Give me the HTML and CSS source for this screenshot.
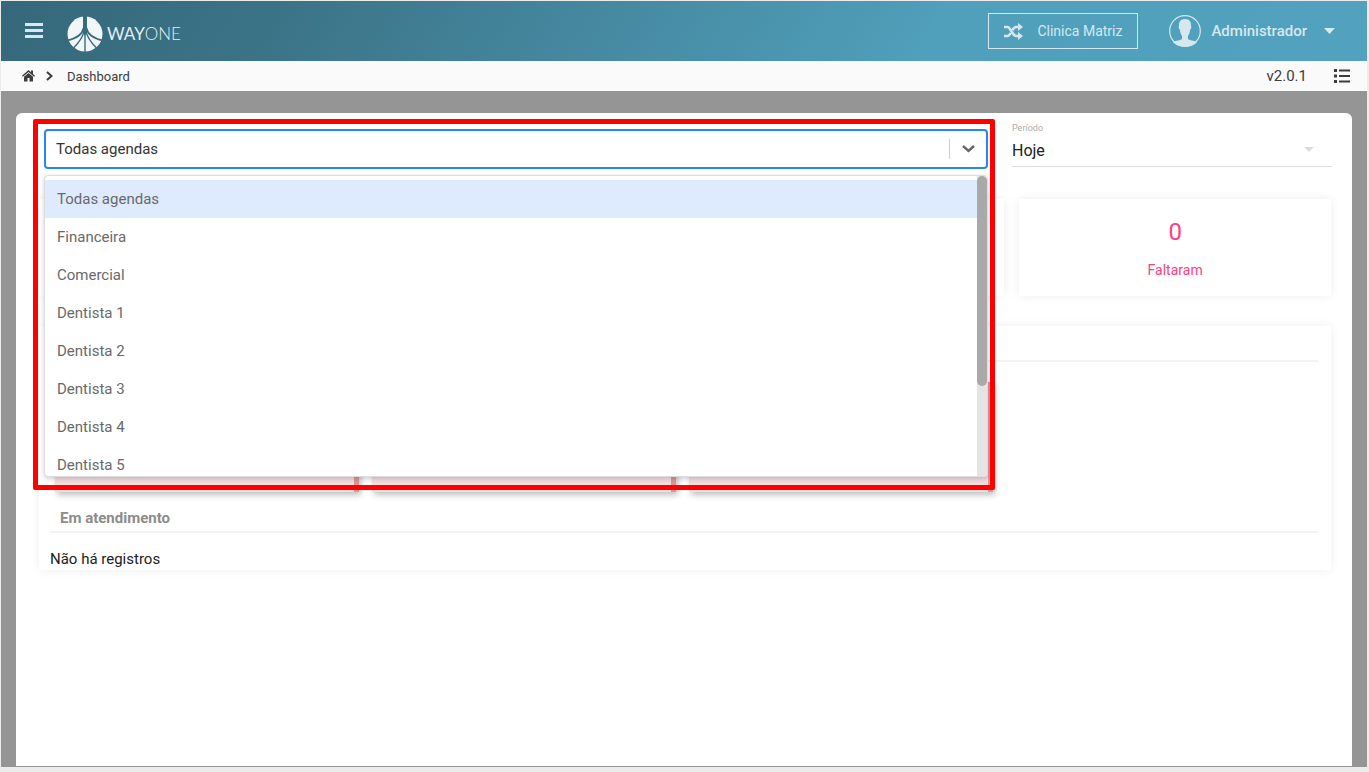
FILE: index.html
```html
<!DOCTYPE html>
<html lang="pt-BR">
<head>
<meta charset="utf-8">
<meta name="viewport" content="width=device-width, initial-scale=1">
<title>WayOne</title>
<link rel="stylesheet" href="styles.css">
</head>
<body>
<div class="app">
  <header class="topbar">
    <button class="icon-button menu-toggle" type="button" aria-label="Menu">
      <svg width="18" height="16" viewBox="0 0 18 16" fill="currentColor"><path d="M0 0h18v3H0zM0 6h18v3H0zM0 12h18v3H0z"/></svg>
    </button>
    <a class="brand" href="#">
      <svg width="36" height="36" viewBox="0 0 36 36" aria-hidden="true">
        <circle cx="18" cy="18" r="17.5" fill="#f1f6f8"/>
        <g fill="none" stroke="#386b7e">
          <path d="M18 10V36" stroke-width="1.400"/>
          <path d="M18 0v14" stroke-width="4"/>
          <path d="M16.500 12C15.500 18 9 22.500 0 24.500" stroke-width="1.600"/>
          <path d="M19.500 12C20.500 18 27 22.500 36 24.500" stroke-width="1.600"/>
          <path d="M17 15C16 21 12 26.500 6.500 32" stroke-width="1.500"/>
          <path d="M19 15C20 21 24 26.500 29.500 32" stroke-width="1.500"/>
        </g>
        <path d="M16 12h4v4l-2 4-2-4z" fill="#386b7e"/>
      </svg>
      <span class="brand-name">WAY<span class="brand-thin">ONE</span></span>
    </a>
    <button class="clinic" type="button">
      <svg width="19" height="17" viewBox="0 0 19 17" fill="none" stroke="currentColor" stroke-width="2.600"><path d="M0 4h3.500c3 0 5 9 8.500 9h2.500M0 13h3.500c1.300 0 2.300-1.300 3.200-3M8.600 7C9.600 5.300 10.600 4 12 4h2.500"/><path d="M14 0l5 4-5 4zM14 9l5 4-5 4z" fill="currentColor" stroke="none"/></svg>
      <span>Clinica Matriz</span>
    </button>
    <button class="user" type="button">
      <svg width="32" height="32" viewBox="0 0 32 32"><circle cx="16" cy="16" r="15.300" fill="none" stroke="currentColor" stroke-width="1.200"/><path d="M16 4c-4.500 0-6.300 2.800-6 7-.8.500-.2 3.300.8 3.600.4 3 1.200 5.200 2.200 6.400v3c-1 1.500-6.400 1.300-9 3.200 3 3 7 4.600 12 4.600s9-1.600 12-4.600c-2.600-1.900-8-1.700-9-3.200v-3c1-1.200 1.800-3.400 2.200-6.400 1-.3 1.600-3.100.8-3.600.3-4.200-1.500-7-6-7z" fill="currentColor"/></svg>
      <span>Administrador</span>
      <svg class="caret" width="11" height="6" viewBox="0 0 11 6" fill="currentColor"><path d="M0 0h11L5.500 6z"/></svg>
    </button>
  </header>

  <nav class="crumbs" aria-label="Navegação">
    <a class="home" href="#" aria-label="Início">
      <svg width="13" height="12" viewBox="0 0 13 12" fill="currentColor"><path d="M6.500 0L0 5.700l.9 1L6.500 2l5.600 4.700.9-1-2-1.800V.6H9v1.600z"/><path d="M6.500 3L2 6.800V11.500h3.500V8h2v3.500H11V6.800z"/></svg>
    </a>
    <svg width="7" height="10" viewBox="0 0 7 10" fill="none" stroke="currentColor" stroke-width="2"><path d="M1 1l4.500 4L1 9"/></svg>
    <span class="crumb">Dashboard</span>
    <span class="version">v2.0.1</span>
    <button class="icon-button" type="button" aria-label="Lista">
      <svg width="16" height="14" viewBox="0 0 16 14" fill="currentColor"><path d="M0 0h3v3H0zM0 5.500h3v3H0zM0 11h3v3H0zM5 .5h11v2H5zM5 6h11v2H5zM5 11.500h11v2H5z"/></svg>
    </button>
  </nav>

  <main class="stage">
    <div class="sheet">
      <div class="filters">
        <div class="agenda">
          <select class="agenda-select" aria-label="Agenda"><option>Todas agendas</option></select>
          <svg class="agenda-arrow" width="13" height="8" viewBox="0 0 13 8" fill="none" stroke="currentColor" stroke-width="2.400"><path d="M1 1l5.500 5L12 1"/></svg>
          <div class="menu">
            <ul class="options" role="listbox" aria-label="Agendas">
              <li class="option selected" role="option" aria-selected="true">Todas agendas</li>
              <li class="option" role="option">Financeira</li>
              <li class="option" role="option">Comercial</li>
              <li class="option" role="option">Dentista 1</li>
              <li class="option" role="option">Dentista 2</li>
              <li class="option" role="option">Dentista 3</li>
              <li class="option" role="option">Dentista 4</li>
              <li class="option" role="option">Dentista 5</li>
            </ul>
            <div class="scrollbar"><div class="thumb"></div></div>
          </div>
          <div class="highlight"></div>
        </div>
        <div class="period">
          <label class="period-label" for="period">Período</label>
          <select class="period-select" id="period"><option>Hoje</option></select>
          <svg class="period-arrow" width="10" height="5" viewBox="0 0 10 5" fill="currentColor"><path d="M0 0h10L5 5z"/></svg>
        </div>
      </div>

      <div class="stats">
        <div class="stat"></div>
        <div class="stat"></div>
        <div class="stat"></div>
        <div class="stat"><span class="stat-value">0</span><span class="stat-name">Faltaram</span></div>
      </div>

      <section class="panel">
        <div class="section-head"></div>
        <div class="tickets">
          <div class="ticket"></div>
          <div class="ticket"></div>
          <div class="ticket"></div>
        </div>
        <h2 class="section-head">Em atendimento</h2>
        <p class="empty">Não há registros</p>
      </section>
    </div>
  </main>
</div>
</body>
</html>
```
FILE: styles.css
```css
* { box-sizing: border-box; }

body {
  margin: 0;
  padding: 1px 2px 5px 1px;
  background: #ececec;
  font-family: Roboto, "Liberation Sans", sans-serif;
  font-size: 15px;
  color: #212121;
}

button, select {
  margin: 0;
  padding: 0;
  border: 0;
  background: none;
  color: inherit;
  font: inherit;
}

svg { display: block; flex: none; }

.app {
  display: flex;
  flex-direction: column;
  min-height: calc(100vh - 6px);
  background: #959595;
}

.topbar {
  display: flex;
  align-items: center;
  height: 60px;
  padding: 0 32px 0 24px;
  background: linear-gradient(120deg, #35687a 0%, #3b7386 20%, #509fbb 68%, #52a1be 100%);
  color: #d5e8ef;
}

.brand {
  display: flex;
  align-items: center;
  gap: 4px;
  margin-left: 24px;
  margin-right: auto;
  padding-top: 5px;
  color: #e4eef2;
  text-decoration: none;
}

.brand-name { font: 400 17px/24px Lato, sans-serif; }
.brand-thin { font-weight: 300; }

.clinic {
  display: flex;
  align-items: center;
  gap: 14px;
  height: 36px;
  padding: 0 15px;
  border: 1px solid #d5e8ef;
  font-size: 14px;
}

.user {
  display: flex;
  align-items: center;
  gap: 10px;
  margin-left: 31px;
  font-weight: 500;
}

.caret { margin-left: 7px; }

.crumbs {
  display: flex;
  align-items: center;
  height: 30px;
  padding: 0 17px 0 21px;
  background: #fafafa;
  color: #3c3c3c;
}

.home { margin-right: 11px; color: inherit; }
.crumb { margin-left: 14px; font-size: 13px; }
.version { margin-left: auto; margin-right: 27px; }

.stage {
  display: flex;
  flex: 1;
  padding: 22px 15px 1px;
}

.sheet {
  flex: 1;
  padding: 16px 21px 24px 23px;
  border-radius: 6px 6px 0 0;
  background: #fff;
}

.filters {
  display: grid;
  grid-template-columns: 944fr 320fr;
  gap: 24px;
  height: 40px;
  margin: 0 -1px 30px 5px;
}

.agenda { position: relative; z-index: 2; }

.agenda-select {
  display: block;
  width: 100%;
  height: 40px;
  padding: 0 10px;
  border: 2px solid #2684ff;
  border-radius: 4px;
  background: #fff;
  color: #333;
  appearance: none;
}

.agenda-arrow {
  position: absolute;
  top: 10px;
  right: 1px;
  width: 38px;
  height: 20px;
  padding: 6px 12px;
  border-left: 1px solid #ccc;
  color: #666;
}

.menu {
  position: absolute;
  top: 46px;
  left: 0;
  right: 0;
  display: flex;
  height: 302px;
  border: 1px solid #ddd;
  border-radius: 4px;
  background: #fff;
  box-shadow: 0 2px 5px rgba(0, 0, 0, .18);
  overflow: hidden;
}

.options {
  flex: 1;
  margin: 0;
  padding: 4px 0 0;
  list-style: none;
}

.option {
  height: 38px;
  padding: 0 12px;
  line-height: 38px;
  color: #696969;
}

.selected { background: #deebff; }

.scrollbar { width: 10px; background: #e4e4e4; }
.thumb { height: 70%; border-radius: 5px; background: #a9a9a9; }

.highlight {
  position: absolute;
  inset: -10px -7px auto -11px;
  height: 371px;
  border: 5px solid #f00;
  border-radius: 2px;
  pointer-events: none;
}

.period {
  position: relative;
  display: flex;
  flex-direction: column;
  height: 39px;
  margin-top: -1px;
  border-bottom: 1px solid #ddd;
}

.period-label {
  margin-top: -6px;
  font-size: 9px;
  line-height: 12px;
  color: #adadad;
}

.period-select {
  height: 32px;
  font-size: 16px;
  text-align: left;
  appearance: none;
}

.period-arrow {
  position: absolute;
  top: 19px;
  right: 18px;
  color: #dcdcdc;
}

.stats {
  display: grid;
  grid-template-columns: repeat(4, 1fr);
  gap: 15px;
  margin-bottom: 30px;
}

.stat {
  display: flex;
  flex-direction: column;
  align-items: center;
  gap: 14px;
  height: 97px;
  padding-top: 19px;
  box-shadow: 0 0 10px rgba(0, 0, 0, .07);
  color: #ff4081;
}

.stat-value { font-size: 24px; line-height: 28px; }
.stat-name { font-size: 14px; line-height: 20px; }

.panel {
  padding: 0 13px 0 11px;
  box-shadow: 0 0 10px rgba(0, 0, 0, .07);
}

.section-head {
  height: 36px;
  margin: 0;
  padding: 0 10px;
  border-bottom: 2px solid #f2f2f8;
  font-size: 15px;
  font-weight: 700;
  line-height: 42px;
  color: #8c8c8c;
}

.tickets {
  display: grid;
  grid-template-columns: repeat(4, 1fr);
  gap: 13px;
  margin: 20px 8px 5px 5px;
}

.ticket {
  height: 110px;
  border-right: 5px solid #dc9393;
  background: #f1dcde;
  box-shadow: 2px 3px 6px rgba(0, 0, 0, .25);
}

.empty {
  margin: 0;
  padding-top: 15px;
  line-height: 22px;
}
```
